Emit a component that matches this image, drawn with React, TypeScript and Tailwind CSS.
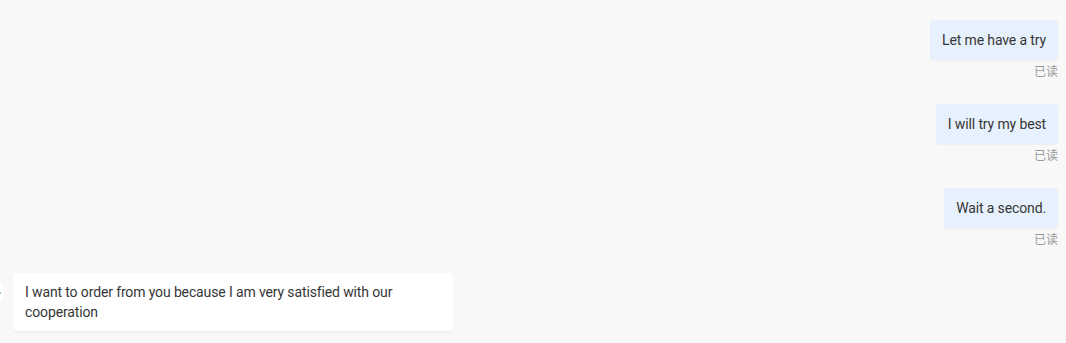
const sent = ["Let me have a try", "I will try my best", "Wait a second."];

function SentMessage({ text }: { text: string }) {
  return (
    <div className="flex flex-col items-end mb-6">
      <div className="bg-[#e7f1fd] rounded-[4px] px-3 py-[10px] text-[14px] leading-5 tracking-[-0.13px] text-[#363636] shadow-[0_1px_1px_rgba(0,0,0,0.04)]">
        {text}
      </div>
      <div className="mt-1 text-[12px] leading-4 text-[#9a9a9a]">已读</div>
    </div>
  );
}

export default function App() {
  return (
    <div
      className="w-[1066px] h-[343px] overflow-hidden bg-[#f8f8f8] pt-5 pr-2"
      style={{ fontFamily: "Roboto, 'Noto Sans CJK SC', sans-serif" }}
    >
      {sent.map((t) => (
        <SentMessage key={t} text={t} />
      ))}
      <div className="flex items-start pt-[1px]">
        <div className="relative -ml-8 w-9 h-9 mt-[1px] rounded-full bg-white shrink-0">
          <span className="absolute right-[3px] top-[18px] w-[2px] h-[2px] rounded-full bg-[#5fb8a8]" />
        </div>
        <div className="ml-[9px] w-[440px] bg-white rounded-[4px] px-3 py-[9px] text-[14px] leading-5 tracking-[-0.13px] text-[#363636] shadow-[0_1px_2px_rgba(0,0,0,0.06)]">
          I want to order from you because I am very satisfied with our cooperation
        </div>
      </div>
    </div>
  );
}
